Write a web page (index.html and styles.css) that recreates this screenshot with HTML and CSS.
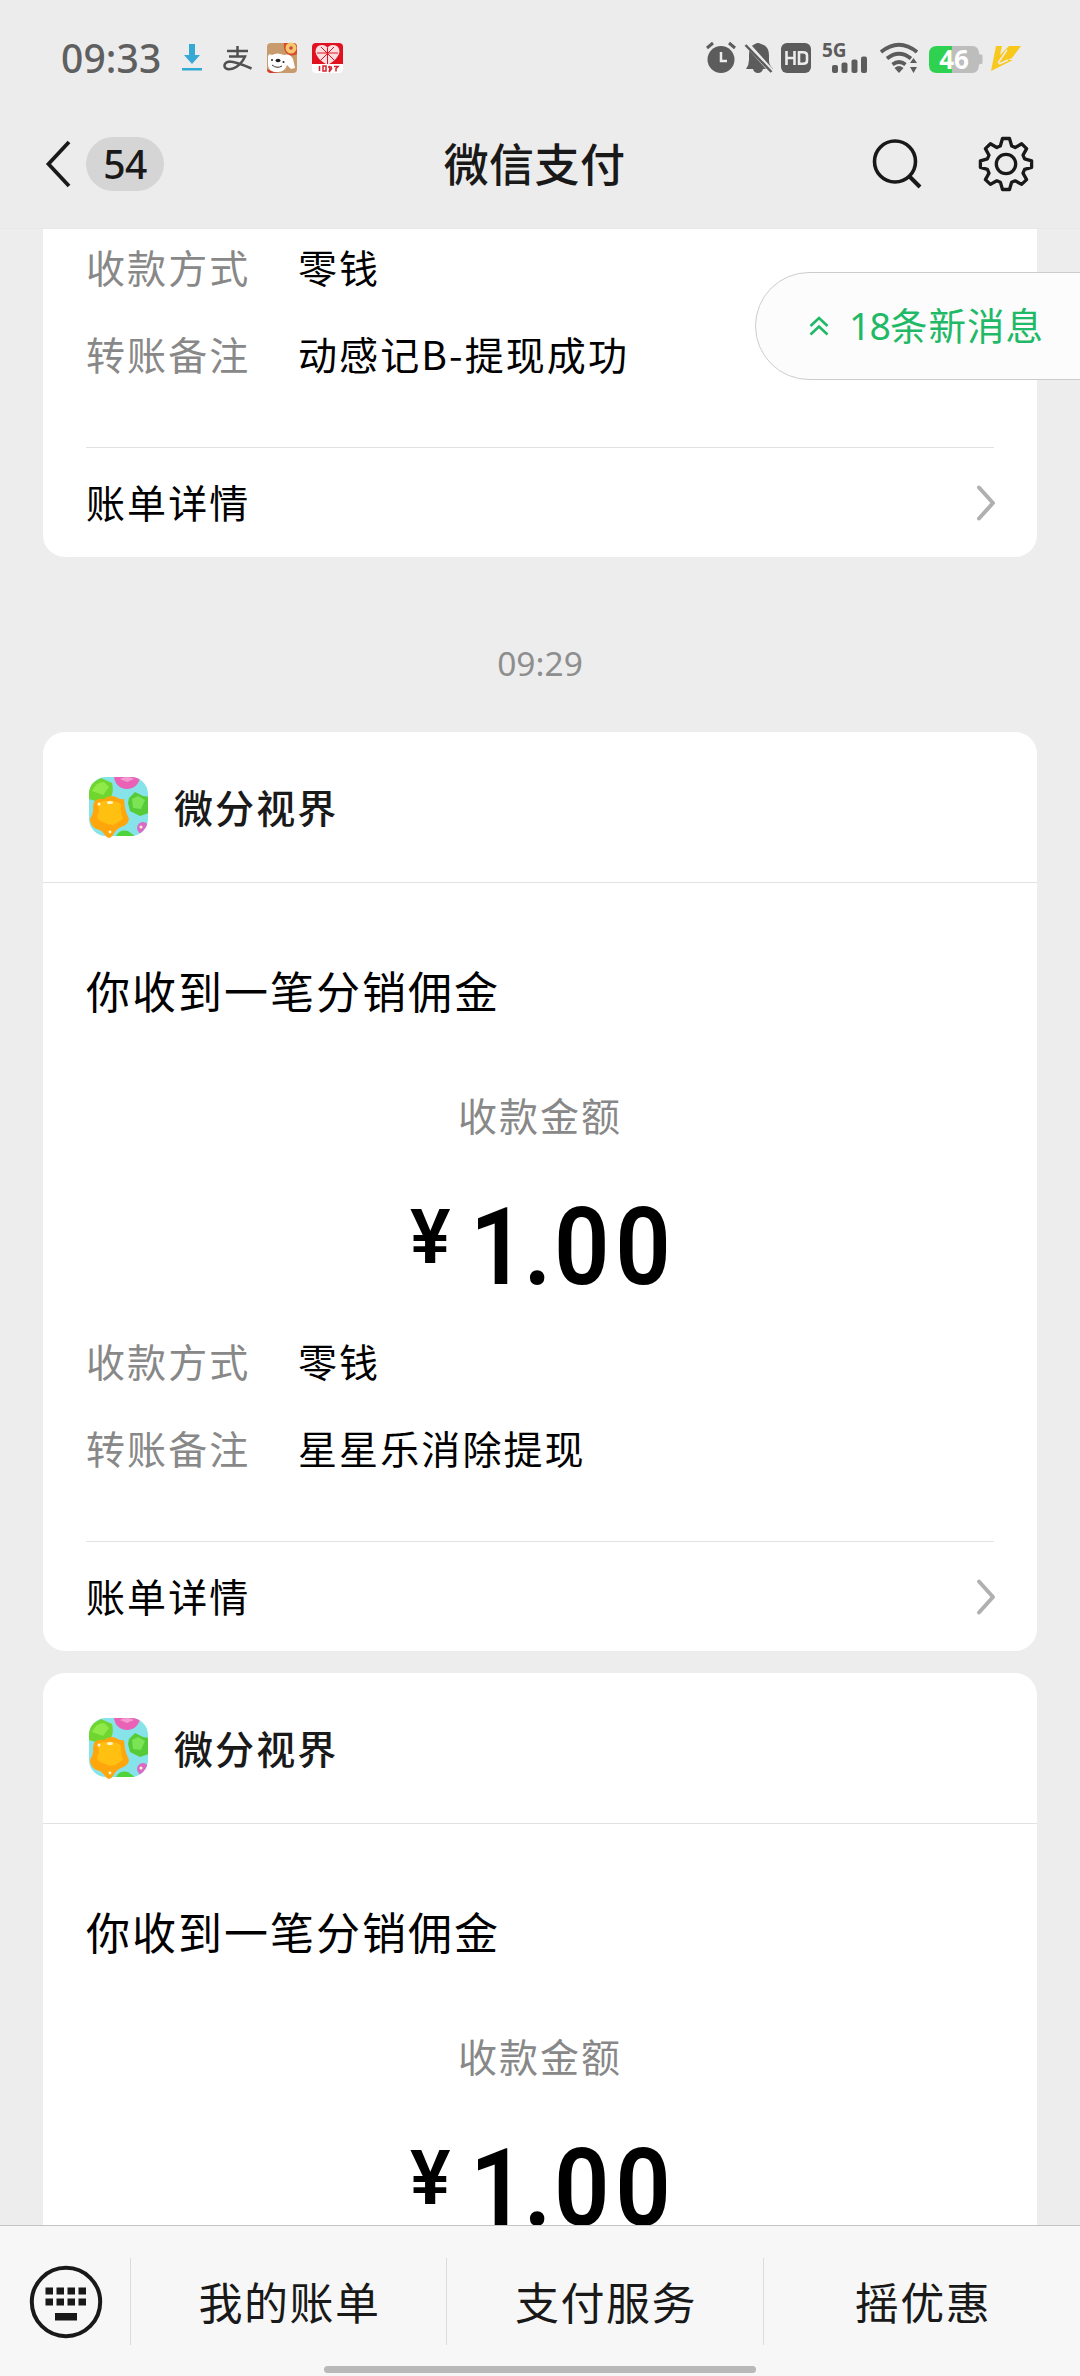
FILE: index.html
```html
<!DOCTYPE html>
<html lang="zh-CN">
<head>
<meta charset="utf-8">
<title>微信支付</title>
<link rel="stylesheet" href="styles.css">
</head>
<body>
<svg class="defs" width="0" height="0">
  <defs>
    <clipPath id="round"><rect width="59" height="59" rx="17"/></clipPath>
    <symbol id="game" viewBox="0 0 59 61">
      <g clip-path="url(#round)">
        <rect width="59" height="59" fill="#86e3ea"/>
        <path d="M0 8L12 1l11 5q2 8-1 14l-9 6L0 22z" fill="#6fd62f"/>
        <path d="M3 14q4-9 12-9l5 5-6 8z" fill="#8fe948"/>
        <circle cx="38" cy="-1" r="13" fill="#ea62b6"/>
        <path d="M31 2q7-4 14 0l-7 3z" fill="#f49ad0"/>
        <path d="M40 21l6-6 8 4 6 1v16l-9 3-10-5-2-8z" fill="#56cb37"/>
        <path d="M43 22l6-3 7 4-4 9-8-1z" fill="#7be455"/>
        <circle cx="54" cy="51" r="6" fill="#d96ac6"/>
        <path d="M27 59q4-7 12-5l7 5z" fill="#4fd43c"/>
      </g>
      <path d="M7 23q4-2 8-1 6-5 12-2 4 3 8 2l1 9q1 5 4 11-1 6-8 8-5 2-8 8-4 6-8 0-4-6-9-6Q1 48 1 42q4-6 3-11 0-6 3-8z" fill="#ffa60d"/>
      <path d="M9 26q6-3 10-2 6-1 13 3-1 8 2 15-6 4-10 6-7-1-13-4-5-4-1-9z" fill="#ffc012"/>
      <g fill="#fff6cf"><circle cx="10" cy="27" r="1.5"/><ellipse cx="21" cy="25.500" rx="3" ry="1.500"/><circle cx="21" cy="55" r="1.400"/><circle cx="52" cy="50" r="1.500"/></g>
    </symbol>
    <symbol id="next" viewBox="0 0 20 38">
      <path d="M3 3.500L17 19 3 34.500" fill="none" stroke="#b0b0b0" stroke-width="4" stroke-linecap="round" stroke-linejoin="round"/>
    </symbol>
  </defs>
</svg>

<div class="screen">
  <header>
    <div class="status">
      <span class="clock">09:33</span>
      <svg class="st-left" width="172" height="36" viewBox="0 0 172 36">
        <g fill="#35a9d6"><path d="M9 4h6v11h5L12 24 4 15h5z"/><rect x="2" y="28" width="20" height="2.500"/></g>
        <g fill="none" stroke="#505050" stroke-width="2.500"><path d="M47 11h21M57.500 6v10M49 16.500h16q-4 9-12 12-7 2-8.500-2-.5-4 5-5 6 0 22 7"/></g>
        <g>
          <rect x="87" y="3" width="30" height="30" rx="4" fill="#c89b6d"/>
          <path d="M104 3h9q4 0 4 4v7q-6 3-10 0-4-4-3-11z" fill="#d64a2d"/>
          <circle cx="111" cy="8" r="5.500" fill="#f6c56c"/><circle cx="111" cy="8" r="1.800" fill="#c44"/>
          <path d="M88 17q0-4 4-2 5-3 12 0 6-2 9 4l2 9-4 1-4-4q-2 7-9 7-9 1-10-7z" fill="#fff"/>
          <ellipse cx="98" cy="20.500" rx="2.500" ry="1.700" fill="#222"/><circle cx="92" cy="20" r="1" fill="#222"/><circle cx="103.500" cy="22" r="1" fill="#222"/>
          <path d="M92 25q5 4 10 1" fill="none" stroke="#333" stroke-width="1"/>
          <path d="M87 29q7 4 13 4h-9q-4 0-4-4z" fill="#d43b2c"/>
        </g>
        <g>
          <rect x="132" y="3" width="31" height="30" rx="4" fill="#fff"/>
          <path d="M136 3h23q4 0 4 4v17h-31V7q0-4 4-4z" fill="#e0121f"/>
          <path d="M147.500 25q-11-6-12-13 0-7 6.500-7 4 0 5.500 3 1.500-3 5.500-3 6.500 0 6.500 7-1 7-12 13z" fill="#fbdfe0"/>
          <path d="M141 7l13 13M154 7l-13 13M147.500 8v16M137 13h21" stroke="#e0121f" stroke-width="1"/>
          <path d="M139.500 26v5M143 26h3v5h-3zM148 27h4M149 26q2 3 0 6M152 28l-3 4M154 26.500h4l-2 2v3" fill="none" stroke="#d8222c" stroke-width="1.500"/>
        </g>
      </svg>
      <svg class="st-right" width="330" height="36" viewBox="0 0 330 36">
        <g fill="#5c5c5c">
          <circle cx="20" cy="19.500" r="13.500"/>
          <path d="M6 8l6-5M34 8l-6-5" stroke="#5c5c5c" stroke-width="3"/>
          <path d="M20 12v9h6" fill="none" stroke="#ececec" stroke-width="2.500"/>
          <path d="M45 29q3-4 3-9v-5q0-9 6-11 3-2 6 0 8 2 8 11v6q0 4 4 8H62q-1 4-5 4t-5-4z"/>
          <path d="M45 3l26 29" stroke="#ececec" stroke-width="5"/>
          <path d="M44.500 5l26 27" stroke="#5c5c5c" stroke-width="2.500"/>
          <rect x="80" y="3" width="30" height="30" rx="6"/>
          <path d="M85.500 11v14M93.500 11v14M85.500 18h8M98 12.300h4q4 0 4 3v5.400q0 3-4 3h-4z" fill="none" stroke="#ececec" stroke-width="2.600"/>
          <text x="121" y="17" class="g5">5G</text>
          <rect x="131" y="25" width="6" height="8" rx="2"/><rect x="140.500" y="22.500" width="6" height="10.500" rx="2"/><rect x="150.500" y="19.500" width="6" height="13.500" rx="2"/><rect x="160" y="16.500" width="6" height="16.500" rx="2"/>
          <g fill="none" stroke="#5c5c5c" stroke-width="3.800"><path d="M180 12q18-14.500 36 0M186 18.500q12-9.500 24 0M191.500 24.500q6.500-5 13 0"/></g>
          <path d="M193.500 28q4.500-4 9 0l-4.500 5z"/>
          <path d="M209 23l3.500-5 3.500 5zM209 27h7l-3.500 6z" stroke="#ececec" stroke-width="1.500" paint-order="stroke"/>
        </g>
        <path d="M236 6h18v27h-18q-8 0-8-8V14q0-8 8-8z" fill="#2fd150"/>
        <path d="M251 6h20q7 0 7 8l3.500 1v8.500l-3.500 1q0 8.500-7 8.500h-20z" fill="#bdbdbd"/>
        <text x="253" y="28.500" text-anchor="middle" class="bat">46</text>
        <path d="M295 6h6l-2 9 9-9h12l-9 12-4 2h5L290 31z" fill="#f8c81d"/>
        <path d="M306 10l-9 13M307 20l-9 4" stroke="#ececec" stroke-width="1.500"/>
      </svg>
    </div>
    <div class="nav">
      <div class="back">
        <svg width="26" height="50" viewBox="0 0 26 50"><path d="M24 3L3.500 25 24 47" fill="none" stroke="#191919" stroke-width="3.800"/></svg>
        <span class="badge">54</span>
      </div>
      <h1>微信支付</h1>
      <div class="tools">
        <svg width="52" height="56" viewBox="0 0 52 56"><circle cx="24" cy="25.500" r="20.500" fill="none" stroke="#191919" stroke-width="3.600"/><path d="M38 40l11 11" stroke="#191919" stroke-width="4"/></svg>
        <svg width="56" height="56" viewBox="-28 -28 56 56"><g fill="none" stroke="#191919" stroke-width="3.300" stroke-linejoin="round"><circle r="9.700"/><path d="M-3.500-25.500h7l2.200 7.500q2 .7 3.500 1.500l6.400-3.700 5 4.800-3.600 6.600 1.600 3.600 7 2v6.600l-7 2-1.600 3.700 3.600 6.500-5 4.800-6.400-3.600-3.600 1.500-2.100 7.200h-7l-2.100-7.200-3.600-1.500-6.400 3.600-5-4.800 3.600-6.500-1.600-3.700-7-2v-6.600l7-2 1.600-3.600-3.600-6.600 5-4.800 6.400 3.700q1.500-.8 3.500-1.500z"/></g></svg>
      </div>
    </div>
  </header>

  <main>
    <section class="card cut">
      <dl>
        <div><dt>收款方式</dt><dd>零钱</dd></div>
        <div><dt>转账备注</dt><dd>动感记B-提现成功</dd></div>
      </dl>
      <a class="detail">账单详情<svg width="20" height="38"><use href="#next"/></svg></a>
    </section>
    <time>09:29</time>
    <section class="card">
      <div class="head"><svg width="59" height="61"><use href="#game"/></svg>微分视界</div>
      <h2>你收到一笔分销佣金</h2>
      <p class="label">收款金额</p>
      <p class="amount"><span class="yen">¥</span><span class="sum"><span class="one">1</span><span class="dot">.</span>00</span></p>
      <dl>
        <div><dt>收款方式</dt><dd>零钱</dd></div>
        <div><dt>转账备注</dt><dd>星星乐消除提现</dd></div>
      </dl>
      <a class="detail">账单详情<svg width="20" height="38"><use href="#next"/></svg></a>
    </section>
    <section class="card">
      <div class="head"><svg width="59" height="61"><use href="#game"/></svg>微分视界</div>
      <h2>你收到一笔分销佣金</h2>
      <p class="label">收款金额</p>
      <p class="amount"><span class="yen">¥</span><span class="sum"><span class="one">1</span><span class="dot">.</span>00</span></p>
    </section>
    <div class="new">
      <svg width="20" height="20" viewBox="0 0 20 20"><path d="M1.500 10L10 2l8.500 8M1.500 18.500L10 10.500l8.500 8" fill="none" stroke="#1fb967" stroke-width="2.600"/></svg>
      <span><b>18</b>条新消息</span>
    </div>
  </main>

  <footer>
    <div class="kbd">
      <svg width="74" height="74" viewBox="0 0 74 74"><circle cx="37" cy="37" r="34.200" fill="none" stroke="#191919" stroke-width="4"/><g fill="#191919"><path d="M16.500 22.500h7.500v7h-7.500zM27.500 22.500h7.500v7h-7.500zM38.500 22.500h7.500v7h-7.500zM49.500 22.500h7.500v7h-7.500zM16.500 33.500h7.500v7h-7.500zM27.500 33.500h7.500v7h-7.500zM38.500 33.500h7.500v7h-7.500zM49.500 33.500h7.500v7h-7.500zM26 48h22v7.500H26z"/></g></svg>
    </div>
    <a>我的账单</a>
    <a>支付服务</a>
    <a>摇优惠</a>
    <i class="home"></i>
  </footer>
</div>
</body>
</html>
```

FILE: styles.css
```css
* { box-sizing: border-box; margin: 0; padding: 0; }
body {
  width: 1080px;
  height: 2376px;
  overflow: hidden;
  background: #ededed;
  color: #000;
  font-family: "Noto Sans CJK SC", sans-serif;
}
.defs { position: absolute; }
.screen { height: 2376px; display: flex; flex-direction: column; }

header { height: 229px; flex: none; border-bottom: 1px solid #e8e8e8; background: #ececec; }
.status { height: 100px; padding: 20px 60px 0 61px; display: flex; align-items: flex-start; }
.status svg { overflow: visible; }
.clock {
  width: 116px;
  font: 500 39px/76px "Noto Sans", sans-serif;
  letter-spacing: 0.1px;
  color: #5f5f5f;
}
.st-left { margin: 20px 0 0 3px; }
.st-right { margin: 20px -11px 0 auto; }
.g5 { font: 700 19px "Noto Sans", sans-serif; }
.bat { font: 700 26px "Noto Sans", sans-serif; fill: #fff; }

.nav { height: 128px; padding: 0 46px 0 45px; display: grid; grid-template-columns: 1fr auto 1fr; align-items: center; }
.back { display: flex; align-items: center; gap: 15px; }
.badge {
  width: 78px;
  height: 54px;
  border-radius: 27px;
  background: #d5d5d5;
  text-align: center;
  font: 500 39px/53px "Noto Sans", sans-serif;
  letter-spacing: -0.6px;
  color: #191919;
}
h1 { margin: 0 10px 3px 0; font-size: 45px; line-height: 60px; font-weight: 500; letter-spacing: 0.4px; color: #191919; }
.tools { display: flex; justify-content: flex-end; gap: 55px; }

main { position: relative; flex: 1; overflow: hidden; padding: 0 43px; display: flex; flex-direction: column; }
.card { flex: none; padding: 0 43px; border-radius: 22px; background: #fff; }
.card + .card { margin-top: 22px; }
.cut { padding-top: 7px; border-radius: 0 0 22px 22px; }
dl { display: flex; flex-direction: column; gap: 27px; font-size: 39px; line-height: 60px; letter-spacing: 2.1px; }
dl div { display: flex; }
dt { width: 212px; color: #888; }
.detail {
  height: 110px;
  margin-top: 64px;
  padding-bottom: 4px;
  border-top: 1px solid #e2e2e2;
  display: flex;
  align-items: center;
  justify-content: space-between;
  font-size: 39px;
  letter-spacing: 2.1px;
}
.detail svg { margin: 4px -2px 0 0; }
time { display: block; margin: 76px 0 39px; text-align: center; font: 400 33.5px/60px "Noto Sans", sans-serif; color: #8e8e8e; }
.head {
  height: 151px;
  margin: 0 -43px;
  padding: 0 46px 3px;
  border-bottom: 1px solid #e2e2e2;
  display: flex;
  align-items: center;
  gap: 26px;
  font-size: 39px;
  line-height: 56px;
  font-weight: 500;
  letter-spacing: 2.1px;
  color: #1a1a1a;
}
.head svg { margin-top: 4px; }
h2 { margin-top: 77px; font-size: 44px; line-height: 60px; font-weight: 400; letter-spacing: 2px; }
.label { margin-top: 64px; font-size: 39px; line-height: 60px; letter-spacing: 2px; text-align: center; color: #888; }
.amount {
  height: 186px;
  padding: 43px 0 0 324px;
  display: flex;
  gap: 19px;
  font: 600 108px/120px Roboto, sans-serif;
}
.yen { font-size: 76px; line-height: 101px; }
.sum { letter-spacing: 6.4px; transform: scaleX(0.9); transform-origin: left; }
.one { letter-spacing: -2px; }
.dot { letter-spacing: 3px; }

.new {
  position: absolute;
  top: 43px;
  right: -1px;
  width: 326px;
  height: 108px;
  padding-left: 53px;
  border: 1px solid #ccc;
  border-radius: 54px 0 0 54px;
  background: #fcfcfc;
  display: flex;
  align-items: center;
  gap: 22px;
  font: 400 37.5px/60px "Noto Sans", "Noto Sans CJK SC", sans-serif;
  letter-spacing: 1px;
  color: #1fb967;
}
.new b { margin-left: -2px; font-weight: 400; letter-spacing: -1px; }

footer {
  position: relative;
  height: 151px;
  flex: none;
  padding-top: 32px;
  border-top: 1px solid #c4c4c4;
  background: #f7f7f7;
  display: grid;
  grid-template-columns: 130px 316px 317px 317px;
  grid-template-rows: 87px;
}
.kbd { padding: 7px 0 0 29px; }
footer a {
  border-left: 1px solid #dcdcdc;
  padding-left: 2px;
  text-align: center;
  font-size: 44px;
  line-height: 86px;
  letter-spacing: 1.5px;
  color: #191919;
}
.home { position: absolute; left: 324px; bottom: 3px; width: 432px; height: 7px; border-radius: 4px; background: #b9b9b9; }
```
